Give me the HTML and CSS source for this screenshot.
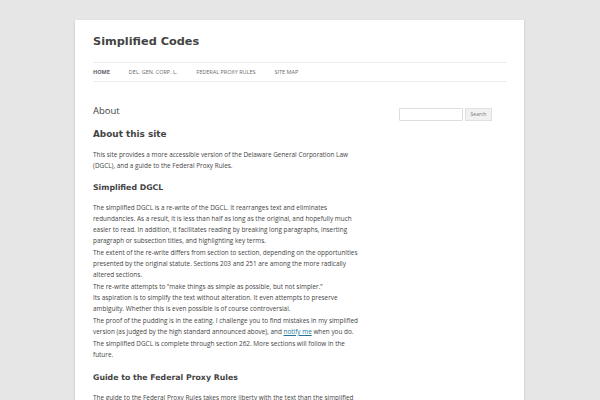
FILE: index.html
```html
<!DOCTYPE html>
<html>
<head>
<meta charset="utf-8">
<link rel="stylesheet" href="styles.css">
</head>
<body>
<div class="site">
  <header class="masthead">
    <h1 class="site-title">Simplified Codes</h1>
    <nav class="nav">
      <a class="current">HOME</a>
      <a>DEL. GEN. CORP. L.</a>
      <a>FEDERAL PROXY RULES</a>
      <a>SITE MAP</a>
    </nav>
  </header>
  <div class="main">
    <div class="content">
      <h1 class="entry-title">About</h1>
      <h2 class="h-big">About this site</h2>
      <p>This site provides a more accessible version of the Delaware General Corporation Law (DGCL), and a guide to the Federal Proxy Rules.</p>
      <h3 class="h-mid">Simplified DGCL</h3>
      <p>The simplified DGCL is a re-write of the DGCL. It rearranges text and eliminates redundancies. As a result, it is less than half as long as the original, and hopefully much easier to read. In addition, it facilitates reading by breaking long paragraphs, inserting paragraph or subsection titles, and highlighting key terms.</p>
      <p>The extent of the re-write differs from section to section, depending on the opportunities presented by the original statute. Sections 203 and 251 are among the more radically altered sections.</p>
      <p>The re-write attempts to “make things as simple as possible, but not simpler.”<br>Its aspiration is to simplify the text without alteration. It even attempts to preserve ambiguity. Whether this is even possible is of course controversial.</p>
      <p>The proof of the pudding is in the eating. I challenge you to find mistakes in my simplified version (as judged by the high standard announced above), and <a class="link">notify me</a> when you do.</p>
      <p>The simplified DGCL is complete through section 262. More sections will follow in the future.</p>
      <h3 class="h-mid guide">Guide to the Federal Proxy Rules</h3>
      <p>The guide to the Federal Proxy Rules takes more liberty with the text than the simplified DGCL does.</p>
    </div>
    <aside class="sidebar">
      <div class="search">
        <span class="search-input"></span>
        <span class="search-btn">Search</span>
      </div>
    </aside>
  </div>
</div>
</body>
</html>
```
FILE: styles.css
```css
html, body {
  margin: 0;
  padding: 0;
  background: #e6e6e6;
  height: 100%;
  overflow: hidden;
}
body {
  font-family: "Open Sans", sans-serif;
  color: #444;
}
.site {
  margin: 20px 0 0 75px;
  width: 414px;
  padding: 0 17px 0 18px;
  background: #fff;
  min-height: 400px;
  box-shadow: 0 1px 2px rgba(0,0,0,0.2);
}
.masthead {
  padding-top: 14px;
}
.site-title {
  margin: 0;
  font-family: "DejaVu Sans", sans-serif;
  font-size: 11.3px;
  line-height: 16px;
  font-weight: bold;
  color: #444;
}
.nav {
  margin-top: 12px;
  border-top: 1px solid #ededed;
  border-bottom: 1px solid #ededed;
  height: 18px;
  display: flex;
  align-items: center;
}
.nav a {
  font-size: 5.5px;
  color: #6a6a6a;
  margin-right: 19px;
}
.nav a.current {
  font-weight: bold;
  color: #5e5e5e;
}
.main {
  display: flex;
  padding-top: 22px;
}
.content {
  width: 266px;
  font-size: 6.4px;
  line-height: 11px;
}
.entry-title {
  margin: 0;
  font-size: 9.5px;
  font-weight: normal;
  line-height: 14px;
}
.h-big,
.h-mid {
  font-family: "DejaVu Sans", sans-serif;
  font-weight: bold;
}
.h-big {
  margin: 9px 0 0;
  font-size: 8.9px;
  line-height: 14px;
}
.h-mid {
  margin: 11px 0 8px;
  font-size: 7.8px;
  line-height: 12px;
}
.guide {
  margin-top: 12px;
}
.content p {
  margin: 0 0 1px;
  color: #444;
}
.content h2 + p {
  margin-top: 8px;
}
.link {
  color: #21759b;
  text-decoration: underline;
}
.sidebar {
  margin-left: 40px;
  padding-top: 4px;
}
.search {
  display: flex;
  gap: 2px;
}
.search-input {
  width: 62px;
  height: 11px;
  border: 1px solid #ddd;
  border-radius: 1px;
  background: #fff;
}
.search-btn {
  width: 27px;
  height: 13px;
  box-sizing: border-box;
  border: 1px solid #e0e0e0;
  background: #f1f1f1;
  font-size: 5px;
  line-height: 11px;
  text-align: center;
  color: #777;
}
```
